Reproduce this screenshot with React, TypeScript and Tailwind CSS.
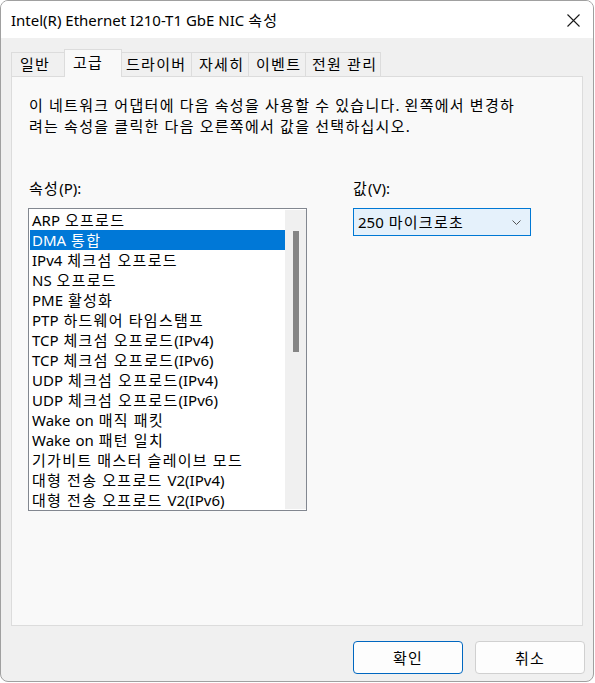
import React from "react";

const FONT = '"Noto Sans", "Noto Sans CJK KR", sans-serif';

function K({ t }: { t: string }) {
  const parts = t.split(/([\uAC00-\uD7A3]+)/);
  return (
    <>
      {parts.map((p, i) =>
        /[\uAC00-\uD7A3]/.test(p) ? (
          <span key={i} className="tracking-[1.3px]">
            {p}
          </span>
        ) : (
          <React.Fragment key={i}>{p}</React.Fragment>
        )
      )}
    </>
  );
}

const items = [
  "ARP 오프로드",
  "DMA 통합",
  "IPv4 체크섬 오프로드",
  "NS 오프로드",
  "PME 활성화",
  "PTP 하드웨어 타임스탬프",
  "TCP 체크섬 오프로드(IPv4)",
  "TCP 체크섬 오프로드(IPv6)",
  "UDP 체크섬 오프로드(IPv4)",
  "UDP 체크섬 오프로드(IPv6)",
  "Wake on 매직 패킷",
  "Wake on 패턴 일치",
  "기가비트 매스터 슬레이브 모드",
  "대형 전송 오프로드 V2(IPv4)",
  "대형 전송 오프로드 V2(IPv6)",
];

export default function App() {
  return (
    <div className="w-[595px] h-[683px] bg-white text-black" style={{ fontFamily: FONT }}>
      <div className="w-[594px] h-[682px] border border-[#a0a0a0] rounded-[8px] overflow-hidden flex flex-col bg-[#f0f0f0]">
        {/* Title bar */}
        <div className="h-[37px] bg-white flex items-center justify-between pl-[10px] pr-[13px] shrink-0">
          <span className="text-[15px] leading-[20px]">
            Intel(R) Ethernet I210-T1 GbE NIC <K t="속성" />
          </span>
          <svg width="13" height="13" viewBox="0 0 13 13" className="mt-[1px]">
            <path d="M0.5 0.5 L12.5 12.5 M12.5 0.5 L0.5 12.5" stroke="#1a1a1a" strokeWidth="1.1" fill="none" />
          </svg>
        </div>

        {/* Tabs */}
        <div className="mt-[11px] h-[27px] flex items-end pl-[10px] text-[15px] leading-[20px] whitespace-nowrap [word-spacing:1px]">
          <div className="w-[53px] h-[24px] border-l border-t border-[#dcdcdc] pl-[8px] pt-[1px]"><K t="일반" /></div>
          <div className="relative z-10 w-[58px] h-[28px] -mb-[1px] border-l border-t border-r border-[#dcdcdc] bg-[#f9f9f9] pl-[8px] pt-[2px]"><K t="고급" /></div>
          <div className="w-[70px] h-[24px] border-t border-r border-[#dcdcdc] pl-[4px] pt-[1px]"><K t="드라이버" /></div>
          <div className="w-[57px] h-[24px] border-t border-r border-[#dcdcdc] pl-[7px] pt-[1px]"><K t="자세히" /></div>
          <div className="w-[57px] h-[24px] border-t border-r border-[#dcdcdc] pl-[7px] pt-[1px]"><K t="이벤트" /></div>
          <div className="w-[75px] h-[24px] border-t border-r border-[#dcdcdc] pl-[6px] pt-[1px]"><K t="전원 관리" /></div>
        </div>

        {/* Panel */}
        <div className="mx-[10px] h-[550px] border border-[#dcdcdc] bg-[#f9f9f9] pl-[16px] pt-[18px] text-[15px] shrink-0 [word-spacing:1px]">
          <p className="leading-[21px] pl-[1px] whitespace-nowrap">
            <K t="이 네트워크 어댑터에 다음 속성을 사용할 수 있습니다. 왼쪽에서 변경하" />
            <br />
            <K t="려는 속성을 클릭한 다음 오른쪽에서 값을 선택하십시오." />
          </p>
          <div className="mt-[41px] flex">
            <div className="w-[279px]">
              <div className="leading-[20px] pl-[1px]"><K t="속성(P):" /></div>
              <div className="mt-[10px] w-[279px] h-[303px] border border-[#828790] bg-white flex">
                <div className="flex-1 pl-[1px] pt-[1px] overflow-hidden">
                  {items.map((t, i) => (
                    <div
                      key={t}
                      className={
                        i === 1
                          ? "h-[20px] leading-[20px] pl-[2px] bg-[#0078d7] text-white whitespace-nowrap"
                          : "h-[20px] leading-[20px] pl-[2px] whitespace-nowrap"
                      }
                    >
                      <K t={t} />
                    </div>
                  ))}
                </div>
                <div className="w-[21px] my-[1px] bg-[#f0f0f0] flex justify-center pt-[21px]">
                  <div className="w-[6px] h-[121px] bg-[#858585]" />
                </div>
              </div>
            </div>
            <div className="ml-[46px]">
              <div className="leading-[20px]"><K t="값(V):" /></div>
              <div className="mt-[10px] w-[178px] h-[28px] border border-[#0078d4] bg-[#e5f1fb] flex items-center justify-between pl-[4px] pr-[9px]">
                <span className="leading-[20px] whitespace-nowrap"><K t="250 마이크로초" /></span>
                <svg width="9" height="5" viewBox="0 0 9 5">
                  <path d="M0.5 0.5 L4.5 4.5 L8.5 0.5" stroke="#555" strokeWidth="1" fill="none" />
                </svg>
              </div>
            </div>
          </div>
        </div>

        {/* Buttons */}
        <div className="mt-[15px] flex justify-end pr-[8px] gap-[12px] text-[15px]">
          <button className="w-[110px] h-[33px] rounded-[4px] border border-[#0067c0] bg-[#fdfdfd] leading-[20px]"><K t="확인" /></button>
          <button className="w-[110px] h-[33px] rounded-[4px] border border-[#d0d0d0] bg-[#fdfdfd] leading-[20px]"><K t="취소" /></button>
        </div>
      </div>
    </div>
  );
}
